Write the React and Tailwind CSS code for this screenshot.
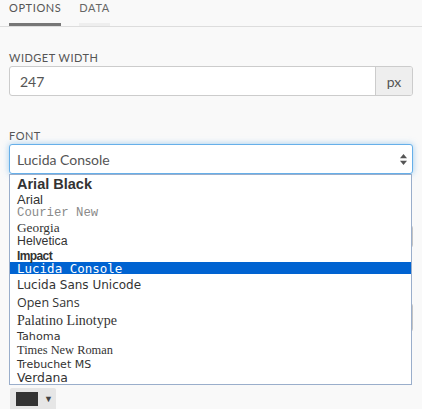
import React from "react";

const items = [
  { t: "Arial Black", h: "h-[16px]", c: "font-['Liberation_Sans',sans-serif] font-bold text-[14.5px]" },
  { t: "Arial", h: "h-[14px]", c: "font-['Liberation_Sans',sans-serif] text-[13px]" },
  { t: "Courier New", h: "h-[14px]", c: "font-['Liberation_Mono',monospace] text-[12.3px] text-[#8a8a8a]" },
  { t: "Georgia", h: "h-[14px]", c: "font-['Liberation_Serif',serif] text-[13.3px]" },
  { t: "Helvetica", h: "h-[14px]", c: "font-['Liberation_Sans',sans-serif] text-[12.3px]" },
  { t: "Impact", h: "h-[15px]", c: "font-['Liberation_Sans',sans-serif] font-bold text-[12px] tracking-[-0.6px]" },
  { t: "Lucida Console", h: "h-[12px]", c: "font-['DejaVu_Sans_Mono',monospace] text-[12.5px]", sel: true },
  { t: "Lucida Sans Unicode", h: "h-[18px]", c: "font-['DejaVu_Sans',sans-serif] text-[12px]" },
  { t: "Open Sans", h: "h-[19px]", c: "font-['Open_Sans',sans-serif] text-[12.5px]" },
  { t: "Palatino Linotype", h: "h-[17px]", c: "font-['Liberation_Serif',serif] text-[14px]" },
  { t: "Tahoma", h: "h-[14px]", c: "font-['DejaVu_Sans',sans-serif] text-[11.2px]" },
  { t: "Times New Roman", h: "h-[13px]", c: "font-['Liberation_Serif',serif] text-[12.4px]" },
  { t: "Trebuchet MS", h: "h-[15px]", c: "font-['DejaVu_Sans',sans-serif] text-[11px]" },
  { t: "Verdana", h: "h-[14px]", c: "font-['DejaVu_Sans',sans-serif] text-[12.4px]" },
];

export default function App() {
  return (
    <div className="w-[422px] h-[409px] bg-[#f9f9f9] overflow-hidden font-['Lato',sans-serif] text-[#555]">
      <div className="flex h-[27px] border-b border-[#dddddd] pl-[9px] gap-[18px]">
        <div className="flex flex-col justify-between">
          <div className="text-[11px] leading-[14px] tracking-[0.6px] pt-[1px] text-[#555]">OPTIONS</div>
          <div className="h-[3px] bg-[#777]" />
        </div>
        <div className="flex flex-col justify-between">
          <div className="text-[11px] leading-[14px] tracking-[0.6px] pt-[1px] text-[#666]">DATA</div>
          <div className="h-[3px] bg-[#eeeeee]" />
        </div>
      </div>

      <div className="px-[9px]">
        <div className="mt-[24px] text-[11px] leading-[14px] tracking-[0.5px] text-[#555]">WIDGET WIDTH</div>
        <div className="mt-[1px] flex h-[30px] rounded-[3px] border border-[#cccccc] bg-white overflow-hidden">
          <div className="flex-1 flex items-center pl-[10px] text-[14px] text-[#555]">247</div>
          <div className="w-[37px] flex items-center justify-center bg-[#eeeeee] border-l border-[#cccccc] text-[14px] text-[#555]">px</div>
        </div>

        <div className="mt-[33px] text-[11px] leading-[14px] tracking-[0.5px] text-[#555]">FONT</div>
        <div className="relative mt-[1px]">
          <div className="flex items-center h-[30px] rounded-[3px] border border-[#66afe9] bg-white shadow-[0_0_6px_rgba(102,175,233,0.6)] pl-[7px] pr-[5px]">
            <div className="flex-1 text-[14px] text-[#555]">Lucida Console</div>
            <svg width="7" height="11" viewBox="0 0 7 11">
              <path d="M3.5 0 L7 4.3 L0 4.3 Z" fill="#555" />
              <path d="M3.5 11 L7 6.7 L0 6.7 Z" fill="#555" />
            </svg>
          </div>

          <div className="mt-[51px] h-[23px] rounded-[3px] border border-[#c4c4c4] bg-white" />
          <div className="mt-[55px] h-[29px] rounded-[3px] border border-[#c4c4c4] bg-white" />
          <div className="mt-[56px] ml-[1px] w-[46px] h-[26px] rounded-[2px] bg-[#e6e6e6] flex items-start pt-[4px] pl-[6px]">
            <div className="w-[22px] h-[14px] bg-[#333333]" />
            <div className="ml-[6px] mt-[2px] text-[9px] text-[#444] leading-[10px]">▼</div>
          </div>

          <div className="absolute left-0 top-[30px] w-[403px] border border-[#9aaecb] bg-white">
            {items.map((it) => (
              <div
                key={it.t}
                className={`${it.h} flex items-center pl-[7px] pt-[3px] whitespace-nowrap leading-none ${it.sel ? "bg-[#0063d1] text-white" : "text-[#333]"}`}
              >
                <span className={`${it.c} ${it.sel ? "text-white" : ""}`}>{it.t}</span>
              </div>
            ))}
          </div>
        </div>
      </div>
    </div>
  );
}
